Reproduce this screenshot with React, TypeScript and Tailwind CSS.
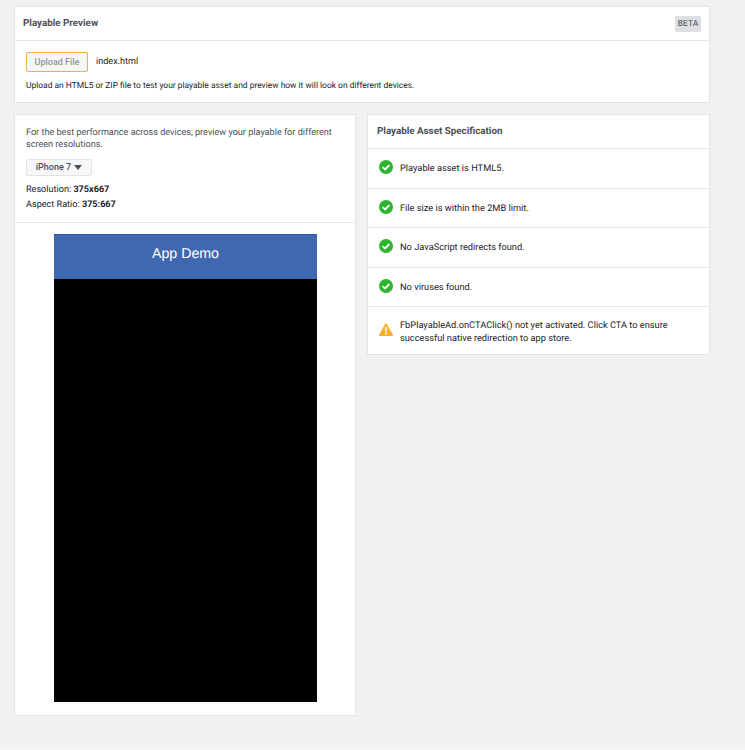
const specItems = [
  "Playable asset is HTML5.",
  "File size is within the 2MB limit.",
  "No JavaScript redirects found.",
  "No viruses found.",
];

const CheckIcon = () => (
  <svg width="14" height="14" viewBox="0 0 14 14" className="shrink-0">
    <circle cx="7" cy="7" r="7" fill="#2db52d" />
    <path d="M3.6 7.2 L6 9.5 L10.4 5" fill="none" stroke="#fff" strokeWidth="1.8" />
  </svg>
);

const WarningIcon = () => (
  <svg width="14" height="13" viewBox="0 0 14 13" className="mt-[4px] shrink-0">
    <path d="M7 0.3 C7.4 0.3 7.7 0.5 7.9 0.9 L13.8 11.4 C14.2 12.1 13.7 12.9 12.9 12.9 L1.1 12.9 C0.3 12.9 -0.2 12.1 0.2 11.4 L6.1 0.9 C6.3 0.5 6.6 0.3 7 0.3 Z" fill="#fdae2b" />
    <rect x="6.2" y="3.8" width="1.6" height="5" fill="#fff" />
    <rect x="6.2" y="9.6" width="1.6" height="1.7" fill="#fff" />
  </svg>
);

export default function App() {
  return (
    <div className="h-[750px] w-[745px] overflow-hidden bg-[#f1f1f1] font-['Roboto',sans-serif] text-[9.1px] text-[#1d2129] [text-rendering:geometricPrecision]">
      <div className="flex h-[747px] flex-col gap-[11px] pl-[14px] pr-[35px] pt-[6px]">
        <section className="h-[97px] border border-[#e3e4e6] bg-white">
          <header className="flex h-[34px] items-center justify-between border-b border-[#e6e7e9] pl-[8px] pr-[8px]">
            <h2 className="pt-[1px] text-[9.8px] font-bold text-[#4b4f56]">Playable Preview</h2>
            <span className="flex h-[16px] w-[26px] items-center justify-center rounded-[2px] bg-[#dddfe3] pt-[1px] text-[8.5px] text-[#4b4f56]">
              BETA
            </span>
          </header>
          <div className="pl-[11px] pt-[11px]">
            <div className="flex items-center gap-[8px]">
              <button className="flex h-[20px] w-[62px] items-center justify-center rounded-[2px] border border-[#f7ab4f] bg-[#f6f7f9] pt-[1px] text-[9px] font-medium text-[#90949c]">
                Upload File
              </button>
              <span className="pt-[2px] text-[9.1px]">index.html</span>
            </div>
            <p className="mt-[7px] text-[8.45px] leading-[14px]">
              Upload an HTML5 or ZIP file to test your playable asset and preview how it will look on different devices.
            </p>
          </div>
        </section>

        <div className="flex items-start gap-[11px]">
          <section className="h-[602px] w-[342px] border border-[#e3e4e6] bg-white">
            <div className="h-[108px] border-b border-[#e6e7e9] pl-[11px] pr-[8px] pt-[12px]">
              <p className="leading-[12px] text-[#4b4f56]">
                For the best performance across devices, preview your playable for different screen resolutions.
              </p>
              <button className="mt-[8px] flex h-[17px] w-[66px] items-center justify-center gap-[3px] rounded-[2px] border border-[#e3e4e6] bg-[#f6f7f9] text-[9px] font-medium text-[#4b4f56]">
                iPhone 7
                <svg width="8" height="5" viewBox="0 0 8 5">
                  <path d="M0 0 H8 L4 5 Z" fill="#4b4f56" />
                </svg>
              </button>
              <p className="mt-[7px] leading-[15px]">
                Resolution: <b className="font-bold">375x667</b>
              </p>
              <p className="leading-[15px]">
                Aspect Ratio: <b className="font-bold">375:667</b>
              </p>
            </div>
            <div className="ml-[39px] mt-[11px] w-[263px]">
              <div className="flex h-[45px] items-center justify-center border-t border-[#2f58a8] bg-[#4068ae] pb-[4px] font-['Liberation_Sans',sans-serif] text-[14.2px] text-white">
                App Demo
              </div>
              <div className="h-[423px] bg-black" />
            </div>
          </section>

          <section className="w-[343px] border border-[#e3e4e6] bg-white">
            <h2 className="flex h-[34px] items-center border-b border-[#e6e7e9] pl-[9px] pt-[1px] text-[9.8px] font-bold text-[#4b4f56]">
              Playable Asset Specification
            </h2>
            {specItems.map((item) => (
              <div key={item} className="flex h-[39.5px] items-center gap-[7px] border-b border-[#e6e7e9] pb-[2px] pl-[11px] text-[9.25px]">
                <CheckIcon />
                <span className="pt-[4px]">{item}</span>
              </div>
            ))}
            <div className="flex h-[47px] items-start gap-[7px] pl-[11px] pt-[12px] text-[9.25px]">
              <WarningIcon />
              <p className="w-[300px] leading-[13px]">
                FbPlayableAd.onCTAClick() not yet activated. Click CTA to ensure successful native redirection to app store.
              </p>
            </div>
          </section>
        </div>
      </div>
      <div className="h-[3px] bg-[#f6f6f6]" />
    </div>
  );
}
